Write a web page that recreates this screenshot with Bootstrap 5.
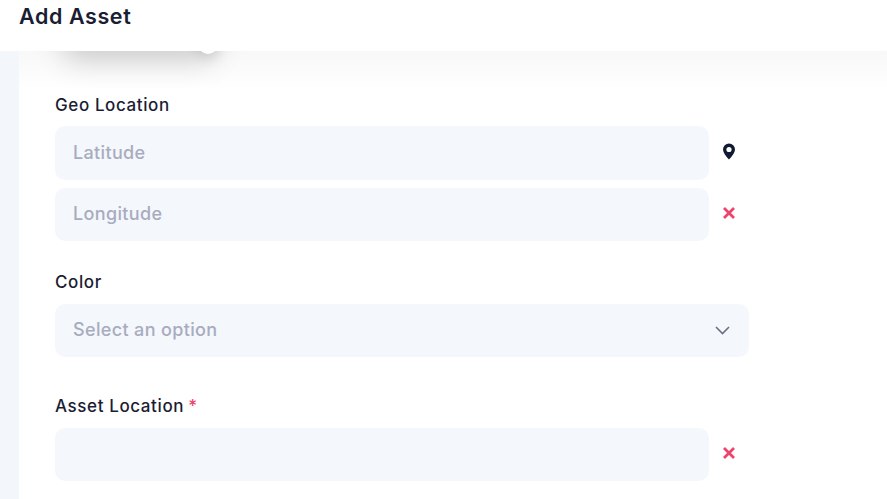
<!DOCTYPE html>
<html lang="en">
<head>
    <meta charset="UTF-8">
    <title>Add Asset</title>
    <meta name="viewport" content="width=device-width, initial-scale=1">
    <link href="https://cdn.jsdelivr.net/npm/bootstrap@5.3.3/dist/css/bootstrap.min.css" rel="stylesheet">
    <style>
        html, body {
            height: 499px;
            overflow: hidden;
        }
        body {
            background: #f3f6fa;
            font-family: Inter, "Noto Sans", sans-serif;
            color: #1a1d33;
        }
        .top-bar {
            height: 51px;
            background: #fff;
            padding: 1px 19px 0;
            position: relative;
            z-index: 2;
        }
        .top-bar h1 {
            font-size: 21.5px;
            font-weight: 600;
            line-height: 30px;
            letter-spacing: .6px;
            margin: 0;
            color: #1a1d33;
        }
        .form-panel {
            margin-left: 19px;
            height: 448px;
            background: #fff;
            padding: 43px 0 0 36px;
            position: relative;
            overflow: hidden;
        }
        .panel-fade {
            position: absolute;
            left: 0;
            right: 0;
            top: 0;
            height: 40px;
            background: linear-gradient(#f8f8f9, #fff);
        }
        .hidden-card {
            position: absolute;
            left: 45px;
            top: -36px;
            width: 150px;
            height: 36px;
            border-radius: 8px;
            box-shadow: 0 8px 30px rgba(0, 0, 0, .2);
        }
        .hidden-dot {
            position: absolute;
            left: 179px;
            top: -18px;
            width: 20px;
            height: 21px;
            border-radius: 50%;
            background: #fff;
            box-shadow: 0 3px 14px rgba(0, 0, 0, .14);
        }
        .form-content {
            position: relative;
        }
        .field-label {
            font-size: 17px;
            font-weight: 450;
            line-height: 22px;
            height: 22px;
            letter-spacing: .6px;
            margin: 0;
            color: #1a1d33;
        }
        .color-label {
            margin-top: 30px;
        }
        .location-label {
            margin-top: 38px;
        }
        .first-row {
            margin-top: 10px;
        }
        .field-row {
            margin-top: 8px;
        }
        .label-gap {
            margin-top: 11px;
        }
        .req-mark {
            color: #f0436c;
            margin-left: -1px;
        }
        .asset-input.form-control,
        .asset-select.form-select {
            height: 53px;
            background-color: #f4f7fb;
            border: 0;
            border-radius: 10px;
            padding: 0 36px 2px 18px;
            font-size: 18px;
            font-weight: 500;
            letter-spacing: .35px;
            color: #1a1d33;
            box-shadow: none;
        }
        .asset-input.form-control {
            width: 654px;
        }
        .first-row .asset-input.form-control {
            height: 54px;
        }
        .asset-input::placeholder {
            color: #a8acbf;
            opacity: 1;
        }
        .asset-select.form-select {
            width: 694px;
            color: #a8acbf;
            background-image: none;
        }
        .select-wrap {
            width: 694px;
        }
        .select-arrow {
            position: absolute;
            right: 19px;
            top: 22px;
            pointer-events: none;
        }
        .side-icon {
            width: 40px;
            flex: none;
            padding-bottom: 2px;
        }
        .first-row .side-icon {
            padding-bottom: 3px;
        }
        .remove-icon {
            padding-bottom: 4px;
        }
    </style>
</head>
<body>
<header class="top-bar d-flex align-items-start">
    <h1>Add Asset</h1>
</header>
<main class="form-panel">
    <div class="panel-fade"></div>
    <div class="hidden-card"></div>
    <div class="hidden-dot"></div>
    <form class="form-content">
        <label class="field-label d-block" for="lat">Geo Location</label>
        <div class="d-flex align-items-center first-row">
            <input type="text" class="form-control asset-input" id="lat" placeholder="Latitude">
            <div class="side-icon d-flex justify-content-center">
                <svg width="14" height="17" viewBox="0 0 14 17"><path fill="#101a33" fill-rule="evenodd" d="M7 .5a6 6 0 0 0-6 6c0 4 6 10 6 10s6-6 6-10a6 6 0 0 0-6-6Zm0 3.4a2.6 2.6 0 1 1 0 5.2 2.6 2.6 0 0 1 0-5.2Z"/></svg>
            </div>
        </div>
        <div class="d-flex align-items-center field-row">
            <input type="text" class="form-control asset-input" placeholder="Longitude">
            <div class="side-icon remove-icon d-flex justify-content-center">
                <svg width="12" height="12" viewBox="0 0 12 12"><path stroke="#f0436c" stroke-width="2.8" d="M1 1l10 10M11 1 1 11"/></svg>
            </div>
        </div>
        <label class="field-label d-block color-label" for="color">Color</label>
        <div class="select-wrap position-relative label-gap">
            <select class="form-select asset-select" id="color">
                <option>Select an option</option>
            </select>
            <svg class="select-arrow" width="15" height="9" viewBox="0 0 15 9"><path fill="none" stroke="#6b6f85" stroke-width="1.6" d="M1 1l6.5 6.5L14 1"/></svg>
        </div>
        <label class="field-label d-block location-label" for="loc">Asset Location <span class="req-mark">*</span></label>
        <div class="d-flex align-items-center label-gap">
            <input type="text" class="form-control asset-input" id="loc">
            <div class="side-icon remove-icon d-flex justify-content-center">
                <svg width="12" height="12" viewBox="0 0 12 12"><path stroke="#f0436c" stroke-width="2.8" d="M1 1l10 10M11 1 1 11"/></svg>
            </div>
        </div>
    </form>
</main>
<script src="https://cdn.jsdelivr.net/npm/bootstrap@5.3.3/dist/js/bootstrap.bundle.min.js"></script>
</body>
</html>
